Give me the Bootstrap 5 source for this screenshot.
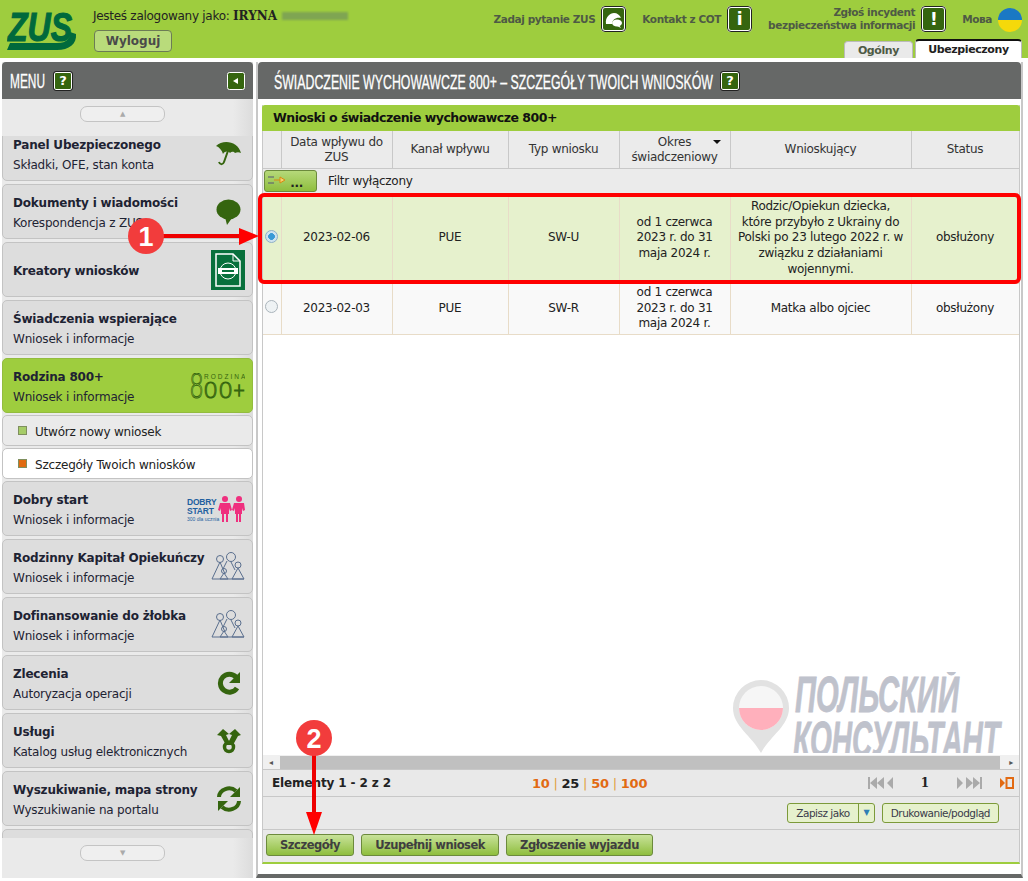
<!DOCTYPE html>
<html lang="pl">
<head>
    <meta charset="UTF-8">
    <meta name="viewport" content="width=device-width, initial-scale=1.0">
    <title>PUE ZUS - Szczegóły Twoich wniosków</title>
    <link href="https://cdn.jsdelivr.net/npm/bootstrap@5.3.0/dist/css/bootstrap.min.css" rel="stylesheet">
    <style>
        html, body { height: 881px; overflow: hidden; }
        body { position: relative; background: #fff; color: #222; font-family: "DejaVu Sans", Verdana, sans-serif; font-size: 12px; line-height: 15px; letter-spacing: -.28px; }
        .top-bar { height: 58px; background: #9ecd3e; }
        .zus-logo { width: 70px; height: 44px; margin: 8px 0 0 7px; flex: none; }
        .zus-logo text { font-family: "Liberation Sans", sans-serif; font-weight: 700; font-style: italic; font-size: 41px; fill: #00693c; stroke: #00693c; stroke-width: 1.2px; letter-spacing: 0; }
        .user-box { margin: 9px 0 0 16px; width: 300px; flex: none; }
        .user-box b { font-family: "DejaVu Serif", serif; font-size: 12px; letter-spacing: 0; }
        .blur-name { display: inline-block; width: 66px; height: 8px; background: #7fa552; filter: blur(1px); margin-left: 1px; }
        .btn-logout { display: block; width: 78px; height: 22px; margin: 6px 0 0 1px; padding: 0; background: #b9db7b; border: 1px solid #6c7c55; border-radius: 4px; font-size: 12px; font-weight: 700; color: #4a4a4a; }
        .top-right { flex: 1; }
        .top-links { height: 39px; padding: 6px 6px 7px 0; font-size: 10.5px; font-weight: 700; line-height: 13px; color: #4e5a45; letter-spacing: -.4px; }
        .link-group { margin-left: 16px; gap: 6px; }
        .green-box { width: 25px; height: 26px; background: #35650f; border: 2px solid #fff; outline: 1px solid #222; outline-offset: -1px; border-radius: 4px; color: #fff; font-weight: 700; font-size: 17px; line-height: 22px; text-align: center; }
        .flag-ua { width: 24px; height: 24px; border-radius: 50%; background: linear-gradient(#1a78c4 50%, #f5d90a 50%); margin-top: 2px; }
        .tab-row { padding-right: 6px; gap: 2px; }
        .tab-item { height: 17px; margin-top: 2px; width: 69px; background: #eaeaea; border: 1px solid #bbb; border-bottom: 0; border-radius: 4px 4px 0 0; text-align: center; font-size: 11px; font-weight: 700; line-height: 17px; color: #4e5a45; letter-spacing: -.4px; }
        .tab-active { height: 19px; margin-top: 0; width: 107px; background: #fff; border-top: 2px solid #111; color: #222; }
        .page-row { height: 820px; padding: 4px 5px 0 2px; gap: 3px; }
        .side-col { width: 251px; height: 816px; flex: none; background: linear-gradient(90deg, #eaeaea 92%, #dcdcdc); }
        .bar-head { height: 37px; background: #666867; border-radius: 4px 4px 0 0; }
        .cond-text { font-family: "Liberation Sans", sans-serif; font-size: 20px; fill: #fff; stroke: #fff; stroke-width: .3px; letter-spacing: 0; }
        .help-box { display: inline-block; flex: none; width: 18px; height: 18px; background: #35650f; border: 1px solid #fff; outline: 1px solid #222; border-radius: 2px; color: #fff; font: 700 13px/16px "DejaVu Sans", sans-serif; text-align: center; }
        .scroll-btn { width: 85px; height: 16px; margin: 7px auto 0 auto; border: 1px solid #c4c4c4; border-radius: 7px; background: #efefef; color: #aaa; font-size: 7px; line-height: 14px; text-align: center; transform: translateX(-5px); }
        .menu-list { height: 702px; margin-top: 14px; overflow: hidden; }
        .menu-inner { margin-top: -10px; display: flex; flex-direction: column; gap: 3px; }
        .menu-entry { height: 55px; flex: none; padding: 10px 7px 8px 10px; background: #dddddd; border: 1px solid #c3c3c3; border-radius: 5px; display: flex; justify-content: space-between; align-items: center; color: #1e2333; letter-spacing: -.2px; }
        .menu-entry b { display: block; font-size: 12px; line-height: 18px; margin-bottom: 4px; letter-spacing: -.2px; }
        .menu-entry.entry-on { background: #9ecd3e; border-color: #93bc3e; }
        .menu-entry svg { flex: none; margin-top: -2px; }
        .menu-entry svg.ico-sm { margin-right: 4px; }
        .sub-entry { height: 31px; flex: none; margin-top: -1px; padding: 3px 0 0 15px; background: #eaeaea; border: 1px solid #c3c3c3; border-radius: 5px; display: flex; align-items: center; gap: 8px; letter-spacing: -.2px; }
        .sub-entry.entry-cur { background: #fff; margin-bottom: -1px; }
        .sub-dot { width: 9px; height: 9px; background: #a6cc68; border: 1px solid #7f8f5e; margin-top: -4px; }
        .entry-cur .sub-dot { background: #e06a10; }
        .main-col { width: 767px; flex: none; height: 816px; border-left: 2px solid #c8c8c8; border-bottom: 4px solid #666867; border-right: 2px solid #c8c8c8; }
        .title-800 { padding-left: 16px; gap: 7px; }
        .main-body { height: 775px; padding: 6px 1px 0 4px; display: flex; flex-direction: column; }
        .panel-box { height: 759px; display: flex; flex-direction: column; border-left: 1px solid #c8c8c8; border-right: 1px solid #c8c8c8; border-bottom: 2px solid #9ecd3e; background: #fff; }
        .panel-title { height: 26px; background: #9ecd3e; border-radius: 3px 3px 0 0; margin: 0 -1px; padding-left: 11px; font-size: 12.5px; font-weight: 700; line-height: 26px; color: #111; letter-spacing: -.5px; }
        .grid-wrap { flex: 1; position: relative; overflow: hidden; }
        .data-grid { table-layout: fixed; width: 756px; border-collapse: collapse; text-align: center; }
        .data-grid th { position: relative; height: 37px; background: #ebebeb; font-weight: 400; border-right: 1px solid #c8c8c8; border-bottom: 1px solid #c8c8c8; padding: 1px 4px 0; color: #333; }
        .sort-mark { position: absolute; right: 9px; top: 9px; width: 0; height: 0; border: 4px solid transparent; border-top-color: #111; border-bottom: 0; }
        .data-grid td { border-right: 1px solid #e8dcc8; border-bottom: 1px solid #e8dcc8; padding: 0 4px; line-height: 15.7px; }
        .filter-row td { height: 26px; background: #ebebeb; text-align: left; border: 0; padding: 0 0 0 1px; }
        .row-sel td { height: 89px; background: #e6f1cd; }
        .row-plain td { height: 51px; background: #f9f9f9; }
        .radio-dot { display: block; width: 13px; height: 13px; margin: 0 auto 4px; border-radius: 50%; border: 1px solid #aab4bb; background: #eef2f4; }
        .row-sel .radio-dot { background: radial-gradient(#3a9ad6 40%, #cfe3ef 45%); border-color: #8fb0c6; }
        .btn-filter { display: inline-flex; align-items: flex-end; justify-content: space-between; width: 53px; height: 22px; padding: 3px 13px 2px 3px; border: 1px solid #6c8a3c; border-radius: 3px; background: linear-gradient(#b6d97a, #8fbe3e); font-weight: 700; line-height: 12px; vertical-align: middle; margin-right: 11px; }
        .btn-filter svg { flex: none; align-self: flex-start; }
        .scroll-line { height: 14px; background: #f0f0f0; position: relative; display: flex; align-items: center; justify-content: space-between; padding: 0 6px; color: #555; font-size: 8px; }
        .scroll-thumb { position: absolute; left: 17px; right: 19px; top: 1px; bottom: 0; background: #c0c0c0; }
        .pager-line { height: 28px; background: #e9e9e9; border-top: 1px solid #c8c8c8; border-bottom: 1px solid #c8c8c8; padding: 0 5px 0 9px; font-weight: 700; letter-spacing: -.12px; }
        .page-sizes { font-size: 13px; margin-left: 141px; color: #e26a12; letter-spacing: -.28px; }
        .page-sizes i { font-style: normal; color: #e0a040; font-weight: 400; margin: 0 4px; }
        .page-sizes b { color: #222; }
        .pager-nav { margin-left: auto; gap: 28px; }
        .pager-nav .num { color: #222; font-family: "DejaVu Serif", serif; font-size: 12px; }
        .pager-nav .nav-end { margin-left: -10px; }
        .save-line { height: 33px; background: #e9e9e9; border-bottom: 1px solid #c8c8c8; padding-right: 20px; gap: 7px; }
        .btn-light-green { height: 20px; padding: 0 8px; border: 1px solid #7c9a3a; border-radius: 3px; background: #e6f1cd; font-size: 10.5px; line-height: 18px; color: #3a3a4a; display: flex; letter-spacing: -.5px; }
        .btn-light-green span { width: 16px; border-left: 1px solid #7c9a3a; margin: 0 -8px 0 8px; color: #2f7fb5; font-size: 8px; text-align: center; }
        .action-line { height: 32px; flex: none; background: #e9e9e9; padding: 4px 2px 0 3px; gap: 7px; }
        .btn-action { height: 22px; padding: 0 13px; border: 1px solid #6c8a3c; border-radius: 3px; background: linear-gradient(#c8e29a, #8fbe3e); font-size: 11.5px; font-weight: 700; line-height: 20px; color: #3f3f3f; letter-spacing: -.45px; }
        .wm-pin { position: absolute; left: 732px; top: 680px; }
        .wm-text { position: absolute; left: 793px; top: 672px; }
        .wm-text text { font-family: "Liberation Sans", sans-serif; font-weight: 700; font-style: italic; font-size: 50px; fill: #bfc2cc; stroke: #bfc2cc; stroke-width: .8px; letter-spacing: 0; }
        .mark-svg { position: absolute; left: 0; top: 0; pointer-events: none; }
        .mark-svg text { font-family: "Liberation Sans", sans-serif; font-weight: 700; font-size: 27px; fill: #fff; text-anchor: middle; letter-spacing: 0; }
    </style>
</head>
<body>
    <header class="top-bar d-flex">
        <svg class="zus-logo" viewBox="0 0 70 44">
            <text x="1" y="33" textLength="64" lengthAdjust="spacingAndGlyphs">ZUS</text>
            <path d="M0 42 L3 35 H50 C60 35 64 30 63 24 L69 26 C70 36 62 42 50 42Z" fill="#00693c"/>
        </svg>
        <div class="user-box">
            <div>Jesteś zalogowany jako: <b>IRYNA</b> <span class="blur-name"></span></div>
            <button class="btn-logout" type="button">Wyloguj</button>
        </div>
        <div class="top-right">
            <div class="top-links d-flex justify-content-end">
                <div class="link-group d-flex align-items-center">Zadaj pytanie ZUS
                    <div class="green-box"><svg width="19" height="19" viewBox="0 0 19 19"><path d="M2 13C1 6 6 2 10 2c3 0 6 2 7 5-5-1-9 2-9 6H4z" fill="#fff"/><ellipse cx="13" cy="12" rx="5" ry="3.500" fill="#fff"/><path d="M15 14l2 3-4-2z" fill="#fff"/></svg></div>
                </div>
                <div class="link-group d-flex align-items-center">Kontakt z COT
                    <div class="green-box">i</div>
                </div>
                <div class="link-group d-flex align-items-center text-end">
                    <div>Zgłoś incydent<br>bezpieczeństwa informacji</div>
                    <div class="green-box">!</div>
                </div>
                <div class="link-group d-flex align-items-center">Мова
                    <div class="flag-ua"></div>
                </div>
            </div>
            <div class="tab-row d-flex justify-content-end">
                <div class="tab-item">Ogólny</div>
                <div class="tab-item tab-active">Ubezpieczony</div>
            </div>
        </div>
    </header>

    <div class="page-row d-flex">
        <aside class="side-col">
            <div class="bar-head d-flex align-items-center justify-content-between ps-2 pe-2">
                <div class="d-flex align-items-center gap-2">
                    <svg width="36" height="37"><text class="cond-text" x="0" y="26" textLength="35" lengthAdjust="spacingAndGlyphs">MENU</text></svg>
                    <span class="help-box">?</span>
                </div>
                <svg width="18" height="18" viewBox="0 0 18 18"><rect x=".5" y=".5" width="17" height="17" rx="2" fill="#35650f" stroke="#fff"/><path d="M6 9l5-3v6z" fill="#fff"/></svg>
            </div>
            <div class="scroll-btn">▲</div>
            <div class="menu-list">
                <div class="menu-inner">
                    <div class="menu-entry">
                        <div><b>Panel Ubezpieczonego</b>Składki, OFE, stan konta</div>
                        <svg class="ico-sm" width="25" height="27" viewBox="0 0 25 27"><path d="M0 6C7-1 22 1 25 13c-2-1-4-1-6 0-1-1-3-2-5 0-2-2-5-2-7 1C6 10 3 7 0 6z" fill="#35650f"/><path d="M13 8L8 22c-1 3-4 3-5 0" fill="none" stroke="#35650f" stroke-width="2"/></svg>
                    </div>
                    <div class="menu-entry">
                        <div><b>Dokumenty i wiadomości</b>Korespondencja z ZUS</div>
                        <svg class="ico-sm" width="25" height="26" viewBox="0 0 25 26"><ellipse cx="12.500" cy="10.500" rx="12" ry="10" fill="#35650f"/><path d="M9 18l2 8 5-7z" fill="#35650f"/></svg>
                    </div>
                    <div class="menu-entry">
                        <b class="mb-0">Kreatory wniosków</b>
                        <svg width="34" height="40" viewBox="0 0 34 40"><rect width="34" height="40" fill="#08703c"/><path d="M5 4h17l7 7v25H5z" fill="none" stroke="#fff" stroke-width="1.500"/><path d="M22 4v7h7" fill="none" stroke="#fff"/><circle cx="17" cy="21" r="8" fill="none" stroke="#fff"/><rect x="7" y="18" width="20" height="6" fill="#fff"/><rect x="11" y="20" width="12" height="2" fill="#08703c"/></svg>
                    </div>
                    <div class="menu-entry">
                        <div><b>Świadczenia wspierające</b>Wniosek i informacje</div>
                    </div>
                    <div class="menu-entry entry-on">
                        <div><b>Rodzina 800+</b>Wniosek i informacje</div>
                        <svg width="56" height="26" viewBox="0 0 56 26" fill="none" stroke="#35650f" stroke-width=".9" font-family="DejaVu Sans" font-weight="200">
                            <text x="15" y="6" font-size="6.500" letter-spacing="2" fill="#35650f" stroke="none" font-family="Liberation Sans" font-weight="400">RODZINA</text>
                            <text x="0" y="25" font-size="34" textLength="15" lengthAdjust="spacingAndGlyphs">8</text>
                            <text x="14" y="25" font-size="22" textLength="30" lengthAdjust="spacingAndGlyphs">00</text>
                            <text x="44" y="23" font-size="18" stroke-width="1.400" textLength="12" lengthAdjust="spacingAndGlyphs">+</text>
                        </svg>
                    </div>
                    <div class="sub-entry"><span class="sub-dot"></span>Utwórz nowy wniosek</div>
                    <div class="sub-entry entry-cur"><span class="sub-dot"></span>Szczegóły Twoich wniosków</div>
                    <div class="menu-entry">
                        <div><b>Dobry start</b>Wniosek i informacje</div>
                        <svg width="58" height="26" viewBox="0 0 58 26"><text x="0" y="9" font-size="8.500" font-weight="700" fill="#1f5f9f" font-family="Liberation Sans">DOBRY</text><text x="0" y="18" font-size="8.500" font-weight="700" fill="#1f5f9f" font-family="Liberation Sans">START</text><text x="0" y="25" font-size="5" fill="#1f5f9f" font-family="Liberation Sans" letter-spacing="0">300 dla ucznia</text><g fill="#ef2f7e"><circle cx="38" cy="3" r="3"/><path d="M33 7h10l2 7-2 1-1-3v6h-1v8h-2v-8h-2v8h-2v-8h-1v-6l-1 3-2-1z"/><circle cx="52" cy="3" r="3"/><path d="M47 7h10l1 7-2 1-1-3v6h-1v8h-2v-8h-1v8h-2v-8h-1v-6l-1 3-2-1z"/></g></svg>
                    </div>
                    <div class="menu-entry">
                        <div><b>Rodzinny Kapitał Opiekuńczy</b>Wniosek i informacje</div>
                        <svg width="34" height="32" viewBox="0 0 34 32" fill="none" stroke="#5a6f8e"><circle cx="20" cy="6" r="4.500"/><circle cx="9" cy="8" r="3.500"/><circle cx="27" cy="14" r="3"/><circle cx="13" cy="20" r="2.500"/><path d="M1 28L9 11l5 12M16 10l-4 8M20 11l4 8M27 17l6 11H21zM13 22l-4 6h8zM1 28h32"/></svg>
                    </div>
                    <div class="menu-entry">
                        <div><b>Dofinansowanie do żłobka</b>Wniosek i informacje</div>
                        <svg width="34" height="32" viewBox="0 0 34 32" fill="none" stroke="#5a6f8e"><circle cx="20" cy="6" r="4.500"/><circle cx="9" cy="8" r="3.500"/><circle cx="27" cy="14" r="3"/><circle cx="13" cy="20" r="2.500"/><path d="M1 28L9 11l5 12M16 10l-4 8M20 11l4 8M27 17l6 11H21zM13 22l-4 6h8zM1 28h32"/></svg>
                    </div>
                    <div class="menu-entry">
                        <div><b>Zlecenia</b>Autoryzacja operacji</div>
                        <svg class="ico-sm" width="24" height="24" viewBox="0 0 24 24"><path d="M20 17a9 9 0 1 1-1-11" fill="none" stroke="#35650f" stroke-width="5"/><path d="M23 1v11H12z" fill="#35650f"/></svg>
                    </div>
                    <div class="menu-entry">
                        <div><b>Usługi</b>Katalog usług elektronicznych</div>
                        <svg class="ico-sm" width="24" height="26" viewBox="0 0 24 26" fill="#35650f"><path d="M6 1l6 5-3 1 3 6 3-6-3-1 6-5 6 6-3 1-5 9H9L4 8 0 7z"/><circle cx="12" cy="19" r="4.500" fill="none" stroke="#35650f" stroke-width="3.500"/></svg>
                    </div>
                    <div class="menu-entry">
                        <div><b>Wyszukiwanie, mapa strony</b>Wyszukiwanie na portalu</div>
                        <svg class="ico-sm" width="24" height="26" viewBox="0 0 24 26" fill="#35650f"><path d="M2 11a10 9 0 0 1 17-6" fill="none" stroke="#35650f" stroke-width="4"/><path d="M23 1v10H13z"/><path d="M22 15a10 9 0 0 1-17 6" fill="none" stroke="#35650f" stroke-width="4"/><path d="M1 25V15h10z"/></svg>
                    </div>
                    <div class="menu-entry"></div>
                </div>
            </div>
            <div class="scroll-btn">▼</div>
        </aside>

        <main class="main-col">
            <div class="bar-head title-800 d-flex align-items-center">
                <svg width="440" height="37"><text class="cond-text" x="0" y="27" textLength="439" lengthAdjust="spacingAndGlyphs">ŚWIADCZENIE WYCHOWAWCZE 800+ – SZCZEGÓŁY TWOICH WNIOSKÓW</text></svg>
                <span class="help-box">?</span>
            </div>
            <div class="main-body">
                <div class="panel-box">
                    <div class="panel-title">Wnioski o świadczenie wychowawcze 800+</div>
                    <div class="grid-wrap">
                        <table class="data-grid">
                            <colgroup>
                                <col style="width:18px"><col style="width:111px"><col style="width:116px"><col style="width:111px"><col style="width:111px"><col style="width:181px"><col style="width:108px">
                            </colgroup>
                            <thead>
                                <tr>
                                    <th></th>
                                    <th>Data wpływu do ZUS</th>
                                    <th>Kanał wpływu</th>
                                    <th>Typ wniosku</th>
                                    <th>Okres świadczeniowy<span class="sort-mark"></span></th>
                                    <th>Wnioskujący</th>
                                    <th>Status</th>
                                </tr>
                            </thead>
                            <tbody>
                                <tr class="filter-row">
                                    <td colspan="7">
                                        <span class="btn-filter">
                                            <svg width="18" height="12" viewBox="0 0 18 12" fill="none"><path d="M0 3h6M0 9h6" stroke="#557"/><path d="M6 6h6V3l5 3-5 3V6" stroke="#d98a10" fill="#f5d070"/></svg>
                                            <span>...</span>
                                        </span>Filtr wyłączony
                                    </td>
                                </tr>
                                <tr class="row-sel">
                                    <td class="p-0"><span class="radio-dot"></span></td>
                                    <td>2023-02-06</td>
                                    <td>PUE</td>
                                    <td>SW-U</td>
                                    <td>od 1 czerwca 2023 r. do 31 maja 2024 r.</td>
                                    <td>Rodzic/Opiekun dziecka, które przybyło z Ukrainy do Polski po 23 lutego 2022 r. w związku z działaniami wojennymi.</td>
                                    <td>obsłużony</td>
                                </tr>
                                <tr class="row-plain">
                                    <td class="p-0"><span class="radio-dot"></span></td>
                                    <td>2023-02-03</td>
                                    <td>PUE</td>
                                    <td>SW-R</td>
                                    <td>od 1 czerwca 2023 r. do 31 maja 2024 r.</td>
                                    <td>Matka albo ojciec</td>
                                    <td>obsłużony</td>
                                </tr>
                            </tbody>
                        </table>
                    </div>
                    <div class="scroll-line"><span class="scroll-thumb"></span><span>◂</span><span>▸</span></div>
                    <div class="pager-line d-flex align-items-center">
                        <span>Elementy 1 - 2 z 2</span>
                        <span class="page-sizes">10<i>|</i><b>25</b><i>|</i>50<i>|</i>100</span>
                        <span class="pager-nav d-flex align-items-center">
                            <svg width="25" height="12" viewBox="0 0 25 12" fill="#aaa"><rect width="2" height="12"/><path d="M9 0v12L2 6zM16 0v12L9 6zM25 0v12l-6-6z"/></svg>
                            <span class="num">1</span>
                            <svg width="25" height="12" viewBox="0 0 25 12" fill="#aaa"><path d="M0 0v12l6-6zM9 0v12l7-6zM16 0v12l7-6z"/><rect x="23" width="2" height="12"/></svg>
                            <svg class="nav-end" width="14" height="12" viewBox="0 0 14 12"><path d="M0 1v10l5-5z" fill="#e26a12"/><rect x="6.500" y="1" width="6.500" height="10" fill="none" stroke="#e26a12" stroke-width="2"/></svg>
                        </span>
                    </div>
                    <div class="save-line d-flex align-items-center justify-content-end">
                        <div class="btn-light-green">Zapisz jako<span>▼</span></div>
                        <div class="btn-light-green">Drukowanie/podgląd</div>
                    </div>
                    <div class="action-line d-flex">
                        <div class="btn-action">Szczegóły</div>
                        <div class="btn-action">Uzupełnij wniosek</div>
                        <div class="btn-action">Zgłoszenie wyjazdu</div>
                    </div>
                </div>
            </div>
        </main>
    </div>

    <!-- watermark and red annotations lie over the page -->
    <svg class="wm-pin" width="58" height="74" viewBox="0 0 58 74">
        <path d="M29 73C20 56 1 46 1 28a28 28 0 0 1 56 0C57 46 38 56 29 73z" fill="#e2e2e2"/>
        <circle cx="29" cy="28" r="22" fill="#f6f6f6"/>
        <path d="M7 28h44a22 22 0 0 1-44 0z" fill="#ffb0bc"/>
    </svg>
    <svg class="wm-text" width="210" height="81">
        <text x="2" y="40" textLength="164" lengthAdjust="spacingAndGlyphs">ПОЛЬСКИЙ</text>
        <text x="0" y="85" textLength="207" lengthAdjust="spacingAndGlyphs">КОНСУЛЬТАНТ</text>
    </svg>
    <svg class="mark-svg" width="1028" height="881">
        <rect x="260" y="195" width="759" height="87" rx="4" fill="none" stroke="#f00" stroke-width="4"/>
        <path d="M160 236H245" stroke="#e00" stroke-width="4"/>
        <path d="M239 228L259 236L239 245z" fill="#f00"/>
        <circle cx="146" cy="236" r="18" fill="#f23c3c"/>
        <text x="146" y="246">1</text>
        <path d="M314 750V820" stroke="#e00" stroke-width="4"/>
        <path d="M306 812H322L314 835z" fill="#f00"/>
        <circle cx="314" cy="738" r="18" fill="#f23c3c"/>
        <text x="314" y="748">2</text>
    </svg>

    <script src="https://cdn.jsdelivr.net/npm/bootstrap@5.3.0/dist/js/bootstrap.bundle.min.js"></script>
</body>
</html>
